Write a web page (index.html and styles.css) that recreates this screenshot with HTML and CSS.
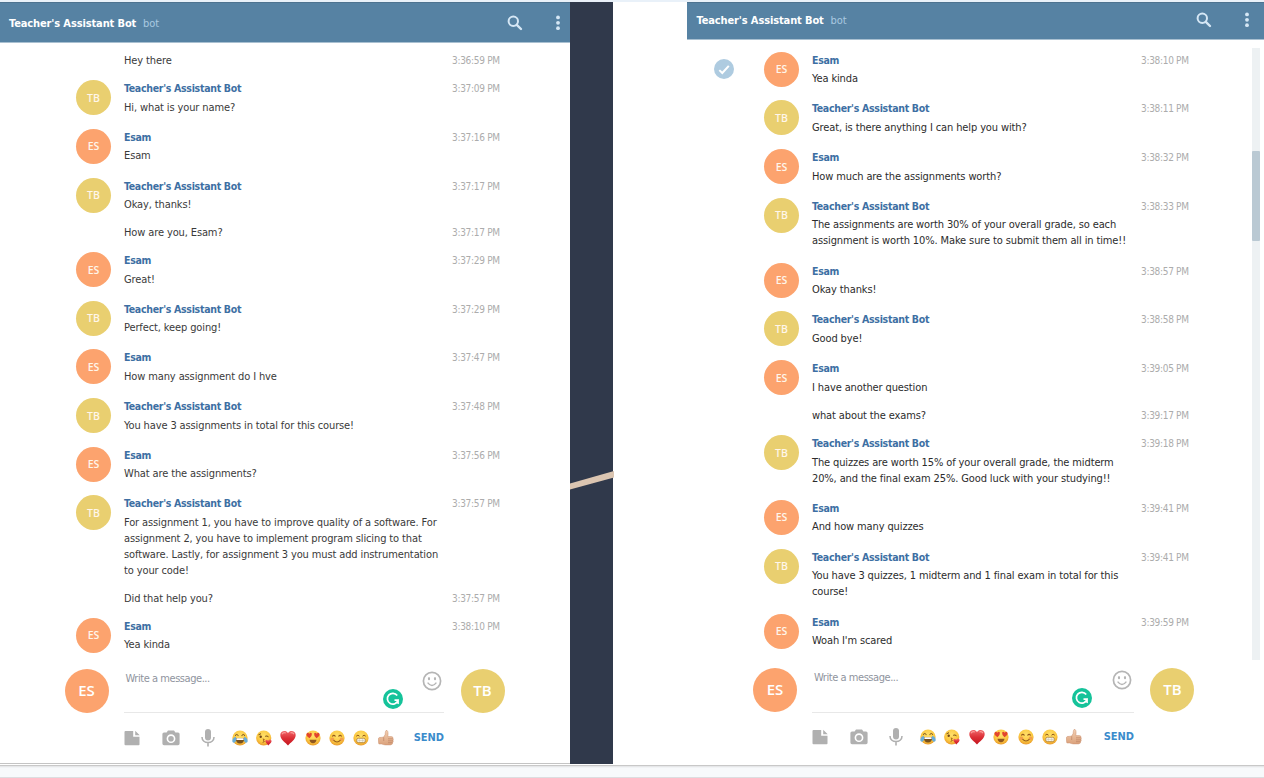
FILE: index.html
```html
<!DOCTYPE html>
<html lang="en">
<head>
<meta charset="utf-8">
<title>Teacher's Assistant Bot</title>
<link rel="stylesheet" href="styles.css">
</head>
<body>
<svg class="defs" width="0" height="0" aria-hidden="true">
  <defs>
    <radialGradient id="face" cx=".5" cy=".35" r=".65"><stop offset="0" stop-color="#ffe06a"/><stop offset=".65" stop-color="#fbc841"/><stop offset="1" stop-color="#e99a2c"/></radialGradient>
    <linearGradient id="red" x1="0" y1="0" x2="0" y2="1"><stop offset="0" stop-color="#f0676a"/><stop offset=".5" stop-color="#dc2f36"/><stop offset="1" stop-color="#c3161f"/></linearGradient>
    <linearGradient id="skin" x1="0" y1="0" x2="0" y2="1"><stop offset="0" stop-color="#f3cfb2"/><stop offset="1" stop-color="#dba27c"/></linearGradient>
    <symbol id="i-search" viewBox="0 0 16 16"><circle cx="6.3" cy="6.3" r="4.7" fill="none" stroke="currentColor" stroke-width="2"/><path d="M9.8 9.8 14 14" stroke="currentColor" stroke-width="2.4" stroke-linecap="round"/></symbol>
    <symbol id="i-more" viewBox="0 0 6 16"><circle cx="3" cy="2.4" r="1.9" fill="currentColor"/><circle cx="3" cy="7.8" r="1.9" fill="currentColor"/><circle cx="3" cy="13.2" r="1.9" fill="currentColor"/></symbol>
    <symbol id="i-file" viewBox="0 0 16 16"><path d="M1.5 1H9.2V6.8H15.5V14A1 1 0 0 1 14.5 15.2H1.5A1 1 0 0 1 .5 14.2V2A1 1 0 0 1 1.5 1ZM11.2 .8 15.7 5.2H11.2Z" fill="currentColor"/></symbol>
    <symbol id="i-camera" viewBox="0 0 18 16"><path fill-rule="evenodd" d="M6 .5H12L13.4 2.4H16A1.6 1.6 0 0 1 17.6 4V13.6A1.6 1.6 0 0 1 16 15.2H2A1.6 1.6 0 0 1 .4 13.6V4A1.6 1.6 0 0 1 2 2.4H4.6ZM9 4.3A4.4 4.4 0 1 0 9 13.1A4.4 4.4 0 1 0 9 4.3ZM9 5.9A2.8 2.8 0 1 1 9 11.5A2.8 2.8 0 1 1 9 5.9Z" fill="currentColor"/></symbol>
    <symbol id="i-mic" viewBox="0 0 14 18"><rect x="4" y="0" width="6" height="11.5" rx="3" fill="currentColor"/><path d="M1 8C1 15.4 13 15.4 13 8M7 13.5V17.5" fill="none" stroke="currentColor" stroke-width="1.6"/></symbol>
    <symbol id="i-smile" viewBox="0 0 20 20"><circle cx="10" cy="10" r="8.6" fill="none" stroke="currentColor" stroke-width="1.7"/><ellipse cx="7" cy="7.7" rx="1.1" ry="1.6" fill="currentColor"/><ellipse cx="13" cy="7.7" rx="1.1" ry="1.6" fill="currentColor"/><path d="M5.6 11.6Q10 17.2 14.4 11.6" fill="none" stroke="currentColor" stroke-width="1.5"/></symbol>
    <symbol id="i-gram" viewBox="0 0 20 20"><circle cx="10" cy="10" r="10" fill="#15c39a"/><path d="M14.2 6.6A5.4 5.4 0 1 0 15 11.2H11.5" fill="none" stroke="#fff" stroke-width="1.7"/><path d="M15.9 11V15.2L12.4 13.8Z" fill="#fff"/></symbol>
    <symbol id="i-check" viewBox="0 0 20 20"><circle cx="10" cy="10" r="10" fill="#aecbe0"/><path d="M5.3 11.1 8.3 14 14.8 6.9" fill="none" stroke="#fff" stroke-width="2"/></symbol>
    <symbol id="e-joy" viewBox="0 0 16 16"><circle cx="8" cy="8" r="7.6" fill="url(#face)"/><path d="M3 5.6Q4.7 3.4 6.5 5.6M9.5 5.6Q11.3 3.4 13 5.6" fill="none" stroke="#6f4a18" stroke-width="1"/><path d="M3.5 8H12.5Q12 13.5 8 13.5T3.5 8Z" fill="#74501f"/><path d="M4.4 8.2H11.6V10H4.4Z" fill="#fff"/><path d="M3.8 6.8Q.2 8 .3 11.2Q.6 13.2 2.7 12.5Q4.8 11.4 3.8 6.8ZM12.2 6.8Q15.8 8 15.7 11.2Q15.4 13.2 13.3 12.5Q11.2 11.4 12.2 6.8Z" fill="#67acd8"/></symbol>
    <symbol id="e-kiss" viewBox="0 0 16 16"><circle cx="7.7" cy="8" r="7.6" fill="url(#face)"/><path d="M2.5 4.8 5 3.7M9.2 6.3Q11 5.4 12.5 6.8" fill="none" stroke="#7a4e17" stroke-width="1"/><circle cx="4.7" cy="6.8" r="1.2" fill="#70451a"/><path d="M6.8 9Q9.3 9.2 7.5 10.6Q9.5 11.5 6.7 12.4" fill="none" stroke="#995314" stroke-width="1"/><path d="M12.2 15.5 9.6 12.1Q8.8 10 10.8 9.8L12.2 10.7Q14 8.7 15.4 10.4Q16.3 12.2 12.2 15.5Z" fill="url(#red)"/></symbol>
    <symbol id="e-heart" viewBox="0 0 16 16"><path d="M8 15.5C5.8 12.5.3 9.7.3 4.9C.3 1 5.8-.7 8 3C10.2-.7 15.7 1 15.7 4.9C15.7 9.7 10.2 12.5 8 15.5Z" fill="url(#red)"/><path d="M2 4.3Q3.3 1.9 5.8 3M10.5 3Q12.5 2 14 4.2" fill="none" stroke="#fa9d9b" stroke-width="1.2"/></symbol>
    <symbol id="e-love" viewBox="0 0 16 16"><circle cx="8" cy="8" r="7.6" fill="url(#face)"/><path d="M4.5 8.3Q.9 5.7 1.5 3.7Q2.9 2 4.2 3.7Q6 2 6.9 3.7Q7.2 5.8 4.5 8.3Z" fill="#e2442d"/><path d="M11.5 8.3Q15.1 5.7 14.5 3.7Q13.1 2 11.8 3.7Q10 2 9.1 3.7Q8.8 5.8 11.5 8.3Z" fill="#e2442d"/><path d="M4.5 9.8H11.5Q11 13.2 8 13.2T4.5 9.8Z" fill="#8f5720"/></symbol>
    <symbol id="e-blush" viewBox="0 0 16 16"><circle cx="8" cy="8" r="7.6" fill="url(#face)"/><circle cx="3.4" cy="9.3" r="1.8" fill="#f3a04b"/><circle cx="12.6" cy="9.3" r="1.8" fill="#f3a04b"/><path d="M3.3 6.5Q4.9 4.3 6.5 6.5M9.5 6.5Q11.1 4.3 12.7 6.5M4.5 10.2Q8 13.8 11.5 10.2" fill="none" stroke="#955b1d" stroke-width="1.1"/></symbol>
    <symbol id="e-grin" viewBox="0 0 16 16"><circle cx="8" cy="8" r="7.6" fill="url(#face)"/><path d="M3.3 6.2Q4.9 4.2 6.5 6.2M9.5 6.2Q11.1 4.2 12.7 6.2" fill="none" stroke="#8b551d" stroke-width="1"/><rect x="3.5" y="8.3" width="9" height="4.3" rx="2" fill="#f7f4e7" stroke="#a8772f" stroke-width=".7"/><path d="M4 10.5H12M6.3 8.6V12.3M9.7 8.6V12.3" stroke="#b8b1a0" stroke-width=".4"/></symbol>
    <symbol id="e-thumb" viewBox="0 0 16 16"><path d="M.5 8.2Q1 7.2 3 7.4L5.6 7.1Q7.6 4.8 7.4 2Q7.7.1 9 .4Q10.6 1.3 9.8 6.6H13.2Q15.2 6.6 14.9 8.2Q15.7 9 15 10.3Q15.6 11.5 14.7 12.4Q14.9 14.5 12.5 14.9H7.2Q4.8 14.6 3.8 14H.9Q-.1 11 .5 8.2Z" fill="url(#skin)" stroke="#ca9170" stroke-width=".5"/><path d="M10 8.8H14.8M10 10.8H15M10 12.7H14.5M5.7 7.3V11" fill="none" stroke="#b97e5e" stroke-width=".6"/></symbol>
  </defs>
</svg>
<main class="stage">
  <section class="panel panel-left">
    <header class="bar"><span class="bar-title">Teacher's Assistant Bot</span><span class="bar-sub">bot</span><svg class="bar-search"><use href="#i-search"/></svg><svg class="bar-more"><use href="#i-more"/></svg></header>
    <div class="log">
      <div class="cont"><p class="text">Hey there</p><time>3:36:59 PM</time></div>
      <div class="msg"><i class="ava tb">TB</i><div><b class="name">Teacher's Assistant Bot</b><p class="text">Hi, what is your name?</p></div><time>3:37:09 PM</time></div>
      <div class="msg"><i class="ava es">ES</i><div><b class="name">Esam</b><p class="text">Esam</p></div><time>3:37:16 PM</time></div>
      <div class="msg"><i class="ava tb">TB</i><div><b class="name">Teacher's Assistant Bot</b><p class="text">Okay, thanks!</p></div><time>3:37:17 PM</time></div>
      <div class="cont"><p class="text">How are you, Esam?</p><time>3:37:17 PM</time></div>
      <div class="msg"><i class="ava es">ES</i><div><b class="name">Esam</b><p class="text">Great!</p></div><time>3:37:29 PM</time></div>
      <div class="msg"><i class="ava tb">TB</i><div><b class="name">Teacher's Assistant Bot</b><p class="text">Perfect, keep going!</p></div><time>3:37:29 PM</time></div>
      <div class="msg"><i class="ava es">ES</i><div><b class="name">Esam</b><p class="text">How many assignment do I hve</p></div><time>3:37:47 PM</time></div>
      <div class="msg"><i class="ava tb">TB</i><div><b class="name">Teacher's Assistant Bot</b><p class="text">You have 3 assignments in total for this course!</p></div><time>3:37:48 PM</time></div>
      <div class="msg"><i class="ava es">ES</i><div><b class="name">Esam</b><p class="text">What are the assignments?</p></div><time>3:37:56 PM</time></div>
      <div class="msg"><i class="ava tb">TB</i><div><b class="name">Teacher's Assistant Bot</b><p class="text">For assignment 1, you have to improve quality of a software. For<br>assignment 2, you have to implement program slicing to that<br>software. Lastly, for assignment 3 you must add instrumentation<br>to your code!</p></div><time>3:37:57 PM</time></div>
      <div class="cont"><p class="text">Did that help you?</p><time>3:37:57 PM</time></div>
      <div class="msg"><i class="ava es">ES</i><div><b class="name">Esam</b><p class="text">Yea kinda</p></div><time>3:38:10 PM</time></div>
    </div>
    <footer class="composer">
      <i class="ava big es">ES</i>
      <div class="entry">
        <div class="field"><span class="hint">Write a message...</span><svg class="gram"><use href="#i-gram"/></svg><svg class="smile"><use href="#i-smile"/></svg></div>
        <div class="tools"><svg class="t-file"><use href="#i-file"/></svg><svg class="t-cam"><use href="#i-camera"/></svg><svg class="t-mic"><use href="#i-mic"/></svg><span class="emojis"><svg><use href="#e-joy"/></svg><svg><use href="#e-kiss"/></svg><svg><use href="#e-heart"/></svg><svg><use href="#e-love"/></svg><svg><use href="#e-blush"/></svg><svg><use href="#e-grin"/></svg><svg><use href="#e-thumb"/></svg></span><b class="send">SEND</b></div>
      </div>
      <i class="ava big tb">TB</i>
    </footer>
  </section>
  <div class="divider"><svg viewBox="0 0 44 762"><path d="M0 481.5 44 469V475.5L0 487.5Z" fill="#dbc5b1"/></svg></div>
  <section class="panel panel-right">
    <header class="bar"><span class="bar-title">Teacher's Assistant Bot</span><span class="bar-sub">bot</span><svg class="bar-search"><use href="#i-search"/></svg><svg class="bar-more"><use href="#i-more"/></svg></header>
    <div class="log">
      <svg class="check"><use href="#i-check"/></svg>
      <div class="track"><div class="thumb"></div></div>
      <div class="msg"><i class="ava es">ES</i><div><b class="name">Esam</b><p class="text">Yea kinda</p></div><time>3:38:10 PM</time></div>
      <div class="msg"><i class="ava tb">TB</i><div><b class="name">Teacher's Assistant Bot</b><p class="text">Great, is there anything I can help you with?</p></div><time>3:38:11 PM</time></div>
      <div class="msg"><i class="ava es">ES</i><div><b class="name">Esam</b><p class="text">How much are the assignments worth?</p></div><time>3:38:32 PM</time></div>
      <div class="msg"><i class="ava tb">TB</i><div><b class="name">Teacher's Assistant Bot</b><p class="text">The assignments are worth 30% of your overall grade, so each<br>assignment is worth 10%. Make sure to submit them all in time!!</p></div><time>3:38:33 PM</time></div>
      <div class="msg"><i class="ava es">ES</i><div><b class="name">Esam</b><p class="text">Okay thanks!</p></div><time>3:38:57 PM</time></div>
      <div class="msg"><i class="ava tb">TB</i><div><b class="name">Teacher's Assistant Bot</b><p class="text">Good bye!</p></div><time>3:38:58 PM</time></div>
      <div class="msg"><i class="ava es">ES</i><div><b class="name">Esam</b><p class="text">I have another question</p></div><time>3:39:05 PM</time></div>
      <div class="cont"><p class="text">what about the exams?</p><time>3:39:17 PM</time></div>
      <div class="msg"><i class="ava tb">TB</i><div><b class="name">Teacher's Assistant Bot</b><p class="text">The quizzes are worth 15% of your overall grade, the midterm<br>20%, and the final exam 25%. Good luck with your studying!!</p></div><time>3:39:18 PM</time></div>
      <div class="msg"><i class="ava es">ES</i><div><b class="name">Esam</b><p class="text">And how many quizzes</p></div><time>3:39:41 PM</time></div>
      <div class="msg"><i class="ava tb">TB</i><div><b class="name">Teacher's Assistant Bot</b><p class="text">You have 3 quizzes, 1 midterm and 1 final exam in total for this<br>course!</p></div><time>3:39:41 PM</time></div>
      <div class="msg"><i class="ava es">ES</i><div><b class="name">Esam</b><p class="text">Woah I'm scared</p></div><time>3:39:59 PM</time></div>
    </div>
    <footer class="composer">
      <i class="ava big es">ES</i>
      <div class="entry">
        <div class="field"><span class="hint">Write a message...</span><svg class="gram"><use href="#i-gram"/></svg><svg class="smile"><use href="#i-smile"/></svg></div>
        <div class="tools"><svg class="t-file"><use href="#i-file"/></svg><svg class="t-cam"><use href="#i-camera"/></svg><svg class="t-mic"><use href="#i-mic"/></svg><span class="emojis"><svg><use href="#e-joy"/></svg><svg><use href="#e-kiss"/></svg><svg><use href="#e-heart"/></svg><svg><use href="#e-love"/></svg><svg><use href="#e-blush"/></svg><svg><use href="#e-grin"/></svg><svg><use href="#e-thumb"/></svg></span><b class="send">SEND</b></div>
      </div>
      <i class="ava big tb">TB</i>
    </footer>
  </section>
</main>
<div class="base"></div>
</body>
</html>
```
FILE: styles.css
```css
* { box-sizing: border-box; }
body {
  margin: 0;
  width: 1264px;
  height: 778px;
  overflow: hidden;
  background: #fff;
  color: #2c2c2c;
  font: 11px/16px "DejaVu Sans Condensed", "DejaVu Sans", sans-serif;
  border-top: 2px solid #e9f1f9;
}
.defs { position: absolute; }
svg { display: block; flex: none; }
p { margin: 0; }
.stage { display: flex; height: 762px; }
.panel { display: flex; flex: none; flex-direction: column; background: #fff; }
.panel-left { width: 569.5px; border-bottom: 1px solid #c4c4c4; color: #3a3a3a; }
.panel-right { width: 577px; margin-left: 73.7px; height: 763px; }

.bar {
  display: flex;
  align-items: center;
  flex: none;
  background: #5682a3;
  border-top: 1px solid #4d7390;
  border-bottom: 1px solid #a9c0d1;
  color: #d5e7f5;
}
.panel-left .bar { height: 41px; padding: 1px 9px 0 9px; }
.panel-right .bar { height: 38px; padding: 0 14px 3px 9.5px; }
.bar-title, .bar-sub { padding-top: 2px; }
.bar-title { width: 134px; color: #fff; font-weight: bold; letter-spacing: -.12px; white-space: nowrap; }
.bar-sub { flex: 1; color: #a9c9e0; }
.bar-search { width: 16px; height: 16px; margin-right: 32px; }
.bar-more { width: 6px; height: 16px; }

.log { flex: 1; position: relative; min-height: 0; }
.panel-left .log { padding: 11.3px 0 0 76px; }
.panel-right .log { padding: 11.5px 0 0 77px; }
.msg, .cont { display: grid; grid-template-columns: 35px 315px 60px; column-gap: 13px; }
.panel-right .msg, .panel-right .cont { grid-template-columns: 35px 316px 60px; }
.msg { padding-bottom: 12.6px; }
.panel-right .msg { padding-bottom: 12.8px; }
.cont { margin-top: -1.3px; padding-bottom: 11.4px; }
.cont .text { grid-column: 2; margin: 0; }
.name { display: block; height: 19.5px; line-height: 16px; font-size: 10.5px; color: #3d6fa3; letter-spacing: -.3px; }
.text { min-height: 16px; white-space: nowrap; margin-bottom: .5px; letter-spacing: -.12px; }
time { color: #acacac; font-size: 10px; line-height: 18px; white-space: nowrap; letter-spacing: -.3px; }
.cont time { line-height: 16px; }
.ava {
  display: grid;
  place-items: center;
  width: 35px;
  height: 35px;
  border-radius: 50%;
  color: #fff;
  font-style: normal;
  flex: none;
}
.msg .ava { margin-bottom: -10px; color: #fff6ea; font: 600 10.5px/16px "Open Sans", sans-serif; }
.es { background: #fca36e; }
.tb { background: #e9cf70; }
.ava.big { width: 44px; height: 44px; padding-bottom: 2px; font: 600 15px/18px "Open Sans", sans-serif; }

.check { position: absolute; left: 27px; top: 19px; width: 20px; height: 20px; }
.track { position: absolute; right: 4px; top: 8px; width: 8px; height: 612px; background: #edf1f3; }
.thumb { height: 90px; margin-top: 103px; background: #bac9d3; border-radius: 1px; }

.composer { display: flex; flex: none; height: 94px; }
.panel-left .composer { padding-left: 64.5px; }
.panel-right .composer { padding-left: 66px; height: 97px; }
.entry { width: 320.5px; margin: 0 16.5px 0 15px; }
.panel-right .entry { width: 322px; }
.field { display: flex; height: 44px; border-bottom: 1px solid #e8e8e8; }
.panel-right .field { height: 45px; }
.hint { flex: 1; padding: 2px 0 0 2px; color: #8f949e; letter-spacing: -.45px; }
.gram { width: 20px; height: 20px; margin: 20px 19.5px 0 0; }
.smile { width: 20px; height: 20px; margin: 2px 2px 0 0; color: #b5b5b5; }
.tools { display: flex; align-items: center; height: 50px; color: #b0b0b0; }
.panel-right .tools { height: 48px; }
.t-file { width: 16px; height: 16px; margin-right: 22.5px; }
.t-cam { width: 18px; height: 16px; margin-right: 20.5px; }
.t-mic { width: 14px; height: 18px; margin-right: 17px; }
.emojis { display: flex; flex: 1; gap: 8.4px; }
.emojis svg { width: 16px; height: 16px; }
.send { color: #3a8bcb; letter-spacing: -.05px; }

.divider { width: 43.8px; height: 762px; flex: none; background: #30394b; }
.divider svg { width: 44px; height: 762px; }
.base {
  height: 14px;
  margin-top: 1px;
  background: linear-gradient(#c8c8c8 0 1px, #e6e7e9 1px 2px, #f1f3f5 2px 3px, #f7f9fb 3px 12px, #dcdde0 12px 13px, #f9fafb 13px);
}
```
